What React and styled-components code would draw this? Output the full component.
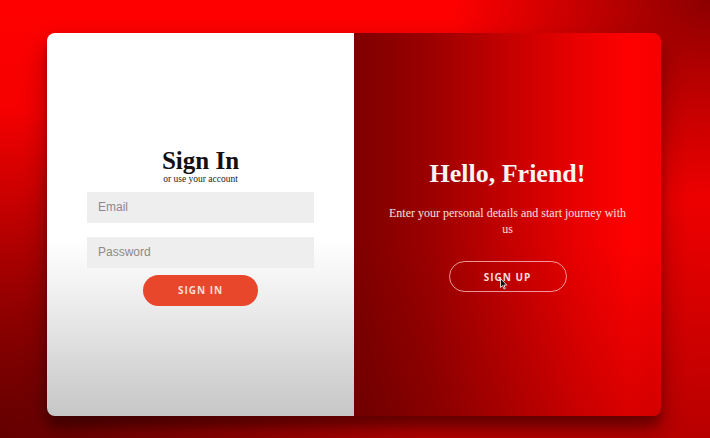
import React from "react";
import styled, { createGlobalStyle } from "styled-components";

const Global = createGlobalStyle`
  html, body { margin: 0; padding: 0; }
  body { width: 710px; height: 438px; overflow: hidden; }
  #root { width: 710px; height: 438px; }
`;

const Page = styled.div`
  width: 710px;
  height: 438px;
  box-sizing: border-box;
  padding: 33px 49px 22px 47px;
  background:
    radial-gradient(ellipse 260px 200px at 100% 0%, rgba(120, 0, 0, 0.85), rgba(120, 0, 0, 0) 100%),
    radial-gradient(ellipse 420px 330px at 0% 100%, rgba(90, 0, 0, 0.9), rgba(90, 0, 0, 0) 100%),
    linear-gradient(to bottom, #ff0000 0%, #ee0000 45%, #b80000 100%);
  display: flex;
`;

const Card = styled.div`
  position: relative;
  flex: 1;
  display: grid;
  grid-template-columns: 307px 1fr;
  border-radius: 8px;
  overflow: hidden;
  box-shadow: 0 14px 28px rgba(0, 0, 0, 0.3), 0 10px 10px rgba(0, 0, 0, 0.25);
`;

const Panel = styled.div`
  display: flex;
  flex-direction: column;
  align-items: center;
  justify-content: center;
  text-align: center;
  padding: ${(p) => p.$pad};
`;

const LeftPanel = styled(Panel)`
  background: linear-gradient(to bottom, #ffffff 0%, #ffffff 54%, #f0f0f0 68%, #c6c6c6 100%);
`;

const RightPanel = styled(Panel)`
  background:
    linear-gradient(to bottom, rgba(0, 0, 0, 0) 55%, rgba(40, 0, 0, 0.18) 100%),
    linear-gradient(to right, #7e0000 0%, #9c0000 25%, #c40000 50%, #e80000 72%, #ff0000 90%, #f60000 100%);
`;

const Title = styled.h1`
  margin: 0;
  font-family: "Liberation Serif", "Times New Roman", serif;
  font-weight: 700;
  font-size: ${(p) => p.$size}px;
  line-height: 1;
  color: ${(p) => p.$color};
  text-shadow: ${(p) => (p.$light ? "0 0 1px rgba(0,0,0,0.2)" : "none")};
`;

const Small = styled.span`
  font-family: "Liberation Serif", "Times New Roman", serif;
  font-size: 9.5px;
  color: #222;
  margin-top: 1px;
  margin-bottom: 8px;
`;

const Input = styled.input`
  width: 227px;
  height: 31px;
  box-sizing: border-box;
  border: none;
  outline: none;
  background: #eeeeee;
  padding: 0 11px;
  margin-bottom: 14px;
  font-family: "Liberation Sans", Arial, sans-serif;
  font-size: 12px;
  color: #333;
  &::placeholder { color: #8a8a8a; }
  &:last-of-type { margin-bottom: 7px; }
`;

const Button = styled.button`
  width: ${(p) => p.$w}px;
  height: 31px;
  border-radius: 16px;
  box-sizing: border-box;
  font-family: "Open Sans", "Liberation Sans", sans-serif;
  font-weight: 700;
  font-size: 10px;
  letter-spacing: 1px;
  text-transform: uppercase;
  cursor: pointer;
  border: ${(p) => (p.$ghost ? "1px solid rgba(255, 200, 200, 0.75)" : "none")};
  background: ${(p) => (p.$ghost ? "transparent" : "#e8472c")};
  color: ${(p) => (p.$ghost ? "#f3dcdc" : "#f7ddd5")};
`;

const Text = styled.p`
  margin: 18px 0 24px;
  width: 260px;
  font-family: "Liberation Serif", "Times New Roman", serif;
  font-size: 12px;
  line-height: 16px;
  color: #f3e2e2;
`;

const ButtonWrap = styled.div`
  position: relative;
`;

const Cursor = styled.svg`
  position: absolute;
  left: 51px;
  top: 17px;
  width: 8px;
  height: 12px;
  pointer-events: none;
`;

export default function App() {
  return (
    <>
      <Global />
      <Page>
        <Card>
          <LeftPanel $pad="4px 0 0 0">
            <Title $size={25} $color="#111">Sign In</Title>
            <Small>or use your account</Small>
            <Input type="email" placeholder="Email" />
            <Input type="password" placeholder="Password" />
            <Button $w={115}>Sign In</Button>
          </LeftPanel>
          <RightPanel $pad="4px 0 0 0">
            <Title $size={26} $color="#fbf2f2" $light>Hello, Friend!</Title>
            <Text>
              Enter your personal details and start journey with
              <br />
              us
            </Text>
            <ButtonWrap>
              <Button $ghost $w={118}>Sign Up</Button>
              <Cursor viewBox="0 0 8 12">
                <path d="M0.5 0.5 L0.5 9.5 L2.6 7.6 L4 11 L5.3 10.4 L3.9 7.1 L6.8 7.1 Z" fill="#111" stroke="#fff" strokeWidth="0.8" strokeLinejoin="round" />
              </Cursor>
            </ButtonWrap>
          </RightPanel>
        </Card>
      </Page>
    </>
  );
}
